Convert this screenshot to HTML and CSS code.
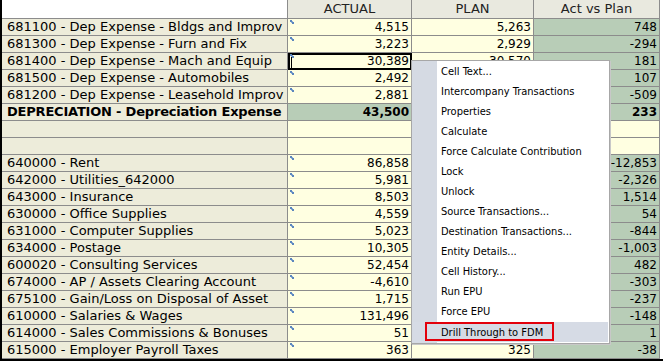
FILE: index.html
```html
<!DOCTYPE html>
<html lang="en">
<head>
  <meta charset="UTF-8">
  <title>Data Grid</title>
  <link rel="stylesheet" href="styles.css">
</head>
<body>
  <div class="sheet">
    <div class="row head">
      <div class="cell label blank"></div>
      <div class="cell">ACTUAL</div>
      <div class="cell">PLAN</div>
      <div class="cell">Act vs Plan</div>
    </div>

    <div class="row">
      <div class="cell label">681100 - Dep Expense - Bldgs and Improv</div>
      <div class="cell num actual"><i class="tick"></i>4,515</div>
      <div class="cell num plan">5,263</div>
      <div class="cell num diff">748</div>
    </div>
    <div class="row">
      <div class="cell label">681300 - Dep Expense - Furn and Fix</div>
      <div class="cell num actual"><i class="tick"></i>3,223</div>
      <div class="cell num plan">2,929</div>
      <div class="cell num diff">-294</div>
    </div>
    <div class="row">
      <div class="cell label">681400 - Dep Expense - Mach and Equip</div>
      <div class="cell num actual selected"><i class="tick"></i>30,389</div>
      <div class="cell num plan">30,570</div>
      <div class="cell num diff">181</div>
    </div>
    <!-- plan values under the menu are hidden -->
    <div class="row">
      <div class="cell label">681500 - Dep Expense - Automobiles</div>
      <div class="cell num actual"><i class="tick"></i>2,492</div>
      <div class="cell num plan"></div>
      <div class="cell num diff">107</div>
    </div>
    <div class="row">
      <div class="cell label">681200 - Dep Expense - Leasehold Improv</div>
      <div class="cell num actual"><i class="tick"></i>2,881</div>
      <div class="cell num plan"></div>
      <div class="cell num diff">-509</div>
    </div>
    <div class="row total">
      <div class="cell label">DEPRECIATION - Depreciation Expense</div>
      <div class="cell num diff">43,500</div>
      <div class="cell num diff"></div>
      <div class="cell num diff">233</div>
    </div>
    <div class="row">
      <div class="cell label"></div>
      <div class="cell actual"></div>
      <div class="cell plan"></div>
      <div class="cell plan"></div>
    </div>
    <div class="row">
      <div class="cell label"></div>
      <div class="cell actual"></div>
      <div class="cell plan"></div>
      <div class="cell plan"></div>
    </div>

    <div class="row">
      <div class="cell label">640000 - Rent</div>
      <div class="cell num actual"><i class="tick"></i>86,858</div>
      <div class="cell num plan"></div>
      <div class="cell num diff">-12,853</div>
    </div>
    <div class="row">
      <div class="cell label">642000 - Utilities_642000</div>
      <div class="cell num actual"><i class="tick"></i>5,981</div>
      <div class="cell num plan"></div>
      <div class="cell num diff">-2,326</div>
    </div>
    <div class="row">
      <div class="cell label">643000 - Insurance</div>
      <div class="cell num actual"><i class="tick"></i>8,503</div>
      <div class="cell num plan"></div>
      <div class="cell num diff">1,514</div>
    </div>
    <div class="row">
      <div class="cell label">630000 - Office Supplies</div>
      <div class="cell num actual"><i class="tick"></i>4,559</div>
      <div class="cell num plan"></div>
      <div class="cell num diff">54</div>
    </div>
    <div class="row">
      <div class="cell label">631000 - Computer Supplies</div>
      <div class="cell num actual"><i class="tick"></i>5,023</div>
      <div class="cell num plan"></div>
      <div class="cell num diff">-844</div>
    </div>
    <div class="row">
      <div class="cell label">634000 - Postage</div>
      <div class="cell num actual"><i class="tick"></i>10,305</div>
      <div class="cell num plan"></div>
      <div class="cell num diff">-1,003</div>
    </div>
    <div class="row">
      <div class="cell label">600020 - Consulting Services</div>
      <div class="cell num actual"><i class="tick"></i>52,454</div>
      <div class="cell num plan"></div>
      <div class="cell num diff">482</div>
    </div>
    <div class="row">
      <div class="cell label">674000 - AP / Assets Clearing Account</div>
      <div class="cell num actual"><i class="tick"></i>-4,610</div>
      <div class="cell num plan"></div>
      <div class="cell num diff">-303</div>
    </div>
    <div class="row">
      <div class="cell label">675100 - Gain/Loss on Disposal of Asset</div>
      <div class="cell num actual"><i class="tick"></i>1,715</div>
      <div class="cell num plan"></div>
      <div class="cell num diff">-237</div>
    </div>
    <div class="row">
      <div class="cell label">610000 - Salaries &amp; Wages</div>
      <div class="cell num actual"><i class="tick"></i>131,496</div>
      <div class="cell num plan"></div>
      <div class="cell num diff">-148</div>
    </div>
    <div class="row">
      <div class="cell label">614000 - Sales Commissions &amp; Bonuses</div>
      <div class="cell num actual"><i class="tick"></i>51</div>
      <div class="cell num plan"></div>
      <div class="cell num diff">1</div>
    </div>
    <div class="row">
      <div class="cell label">615000 - Employer Payroll Taxes</div>
      <div class="cell num actual"><i class="tick"></i>363</div>
      <div class="cell num plan">325</div>
      <div class="cell num diff">-38</div>
    </div>

    <!-- right click menu on the selected cell -->
    <ul class="menu">
      <li>Cell Text...</li>
      <li>Intercompany Transactions</li>
      <li>Properties</li>
      <li>Calculate</li>
      <li>Force Calculate Contribution</li>
      <li>Lock</li>
      <li>Unlock</li>
      <li>Source Transactions...</li>
      <li>Destination Transactions...</li>
      <li>Entity Details...</li>
      <li>Cell History...</li>
      <li>Run EPU</li>
      <li>Force EPU</li>
      <li class="hover"><span class="callout">Drill Through to FDM</span></li>
    </ul>
  </div>
</body>
</html>
```

FILE: styles.css
```css
body {
  margin: 0;
  background: #fff;
  overflow: hidden;
}

.sheet {
  position: relative;
  width: 661px;
  height: 359px;
  border-left: 2px solid #000;
  border-bottom: 2px solid #000;
  font-family: "DejaVu Sans", Verdana, sans-serif;
  font-size: 12px;
  color: #000;
}

.row {
  display: grid;
  grid-template-columns: 286px 124px 122px 126px;
  height: 17px;
}

.row.head {
  height: 19px;
}

.cell {
  position: relative;
  box-sizing: border-box;
  border-right: 1px solid #8c8c8c;
  border-bottom: 1px solid #8c8c8c;
  line-height: 16px;
  white-space: nowrap;
  overflow: hidden;
}

.head .cell {
  background: #e9e9df;
  text-align: center;
  font-size: 13px;
  line-height: 18px;
  color: #222;
}

.head .cell.blank {
  background: #fff;
}

.label {
  background: #edecda;
  padding-left: 5px;
  font-size: 13px;
}

.num {
  text-align: right;
  padding-right: 2px;
}

.actual,
.plan {
  background: #ffffe1;
}

.diff {
  background: #b8cdb7;
}

.total .cell {
  font-weight: bold;
}

.total .label {
  letter-spacing: -0.2px;
}

.tick {
  position: absolute;
  left: 2px;
  top: 1px;
  width: 2px;
  height: 2px;
  background: #5b86bd;
  box-shadow: 2px 2px 0 #5b86bd, 1px 1px 0 #8fb0d8;
}

.selected {
  outline: 2px solid #000;
  outline-offset: -2px;
}

.selected::after {
  content: "";
  position: absolute;
  left: 3px;
  top: 4px;
  height: 11px;
  border-left: 1px solid #000;
}

.menu {
  position: absolute;
  left: 409px;
  top: 60px;
  width: 195px;
  margin: 0;
  padding: 1px;
  list-style: none;
  background: linear-gradient(to right, #d5dae3 25px, #fff 25px);
  border: 1px solid #a7a7a7;
  box-shadow: 1px 1px 0 #c8c8c8;
  font-family: "DejaVu Sans Condensed", "DejaVu Sans", sans-serif;
  font-stretch: condensed;
  font-size: 11px;
}

.menu li {
  position: relative;
  height: 20px;
  line-height: 20px;
  padding-left: 28px;
  white-space: nowrap;
}

.menu li.hover {
  background: #d6dbe5;
}

.callout {
  position: absolute;
  left: 12px;
  top: 0;
  width: 129px;
  height: 19px;
  line-height: 17px;
  padding-left: 14px;
  border: 2px solid #e3000b;
  box-sizing: border-box;
}
```
